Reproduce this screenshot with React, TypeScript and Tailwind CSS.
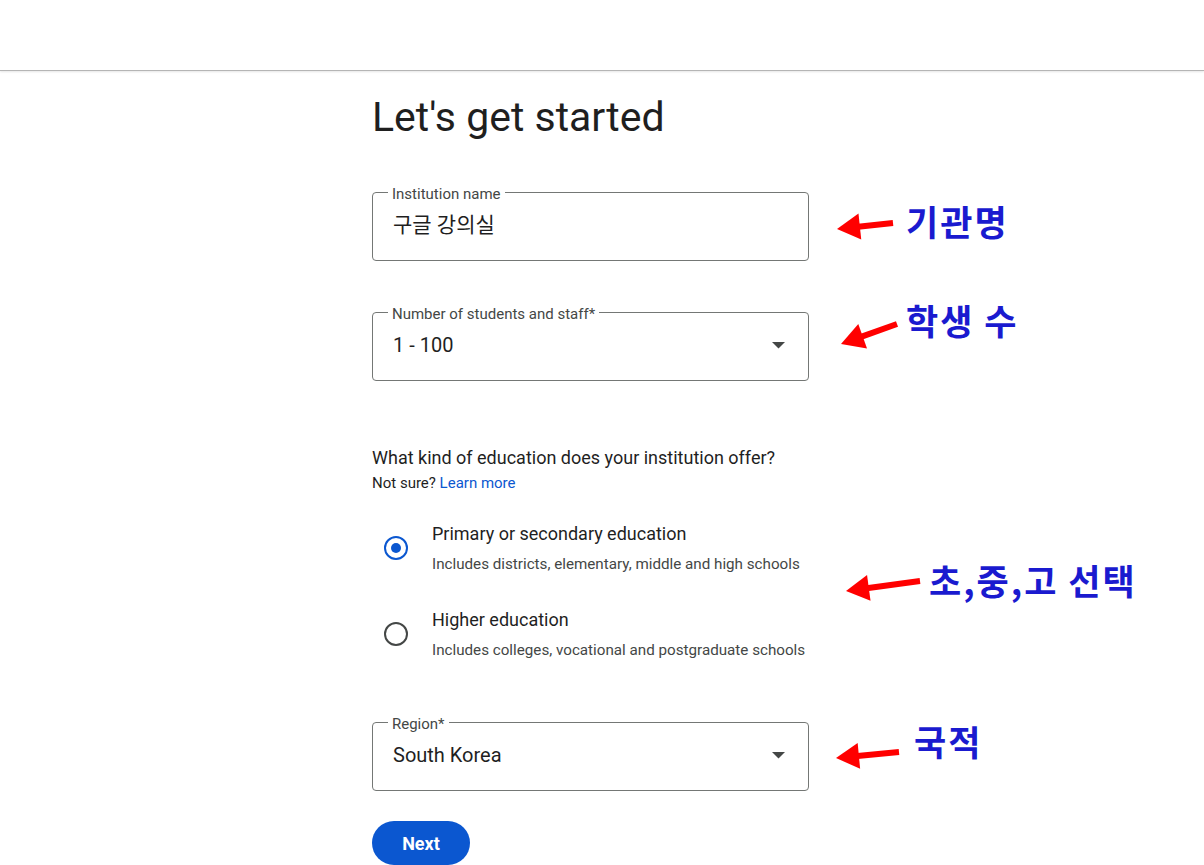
import React from "react";

const FONT = { fontFamily: "Roboto, 'Noto Sans CJK KR', sans-serif" };
const KFONT = { fontFamily: "'Noto Sans CJK KR', 'Noto Sans', sans-serif" };

function DropArrow() {
  return (
    <svg width="13" height="7" viewBox="0 0 13 7" className="ml-auto mr-[3px] shrink-0">
      <polygon points="0,0 13,0 6.5,6.5" fill="#444746" />
    </svg>
  );
}

function Field({ label, value, select, korean }: { label: string; value: string; select?: boolean; korean?: boolean }) {
  return (
    <div className="relative flex h-[69px] w-[437px] items-center rounded-[4px] border border-[#747775] px-5 pb-[3px]">
      <span className="absolute left-[15px] top-[-7px] bg-white px-1 text-[15px] leading-[16px] text-[#444746]">
        {label}
      </span>
      <span className={(korean ? "text-[21px] " : "text-[20px] ") + "leading-[26px] text-[#1f1f1f]"}>{value}</span>
      {select && <DropArrow />}
    </div>
  );
}

function Radio({ checked }: { checked?: boolean }) {
  return (
    <div className="flex w-12 shrink-0 items-center justify-center">
      {checked ? (
        <div className="flex h-[24px] w-[24px] items-center justify-center rounded-full border-[2.5px] border-[#0b57d0]">
          <div className="h-[10px] w-[10px] rounded-full bg-[#0b57d0]" />
        </div>
      ) : (
        <div className="h-[24px] w-[24px] rounded-full border-2 border-[#444746]" />
      )}
    </div>
  );
}

function RadioItem({ checked, title, desc, className }: { checked?: boolean; title: string; desc: string; className?: string }) {
  return (
    <div className={"flex items-center " + (className ?? "")}>
      <Radio checked={checked} />
      <div className="ml-3 flex flex-col">
        <span className="text-[18px] leading-[24px] text-[#1f1f1f]">{title}</span>
        <span className="mt-[8px] text-[15.2px] leading-[20px] text-[#444746]">{desc}</span>
      </div>
    </div>
  );
}

type Pt = [number, number];
function Arrow({ tip, tail }: { tip: Pt; tail: Pt }) {
  const dx = tail[0] - tip[0];
  const dy = tail[1] - tip[1];
  const len = Math.hypot(dx, dy);
  const ux = dx / len;
  const uy = dy / len;
  const hl = 23;
  const hw = 13;
  const bx = tip[0] + ux * hl;
  const by = tip[1] + uy * hl;
  const nx = -uy;
  const ny = ux;
  const pts = `${tip[0]},${tip[1]} ${bx + nx * hw},${by + ny * hw} ${bx - nx * hw},${by - ny * hw}`;
  return (
    <g>
      <line x1={bx - ux * 4} y1={by - uy * 4} x2={tail[0]} y2={tail[1]} stroke="#ff0000" strokeWidth={6} />
      <polygon points={pts} fill="#ff0000" />
    </g>
  );
}

function Note({ text, left, top }: { text: string; left: number; top: number }) {
  return (
    <span
      className="absolute whitespace-pre text-[35px] font-bold leading-none tracking-[2px] text-[#1a1acf]"
      style={{ ...KFONT, left, top }}
    >
      {text}
    </span>
  );
}

export default function App() {
  return (
    <div className="relative h-[865px] w-full overflow-hidden bg-white" style={FONT}>
      <header className="h-[71px] border-b border-[#b5b5b5] bg-white shadow-[0_1px_2px_rgba(0,0,0,0.1)]" />
      <main className="mx-auto w-[460px]">
        <h1 className="mt-[22px] text-[41px] font-normal leading-[48px] text-[#1f1f1f]">Let's get started</h1>
        <div className="mt-[51px]">
          <Field label="Institution name" value="구글 강의실" korean />
        </div>
        <div className="mt-[51px]">
          <Field label="Number of students and staff*" value="1 - 100" select />
        </div>
        <p className="mt-[65px] text-[18px] leading-[24px] text-[#1f1f1f]">
          What kind of education does your institution offer?
        </p>
        <p className="mt-[3px] text-[15px] leading-[20px] text-[#1f1f1f]">
          Not sure? <span className="text-[#0b57d0]">Learn more</span>
        </p>
        <RadioItem
          className="mt-[29px]"
          checked
          title="Primary or secondary education"
          desc="Includes districts, elementary, middle and high schools"
        />
        <RadioItem
          className="mt-[34px]"
          title="Higher education"
          desc="Includes colleges, vocational and postgraduate schools"
        />
        <div className="mt-[62px]">
          <Field label="Region*" value="South Korea" select />
        </div>
        <button className="mt-[30px] flex h-[44px] w-[98px] items-center justify-center rounded-full bg-[#0b57d0] text-[18px] font-bold text-white">
          Next
        </button>
      </main>

      <svg className="pointer-events-none absolute left-0 top-0" width="1204" height="865">
        <Arrow tip={[837, 229]} tail={[893, 223]} />
        <Arrow tip={[841, 344]} tail={[897, 324]} />
        <Arrow tip={[846, 591]} tail={[920, 581]} />
        <Arrow tip={[836, 758]} tail={[899, 752]} />
      </svg>
      <Note text="기관명" left={906} top={203} />
      <Note text="학생 수" left={906} top={302} />
      <Note text="초,중,고 선택" left={929} top={562} />
      <Note text="국적" left={914} top={723} />
    </div>
  );
}
